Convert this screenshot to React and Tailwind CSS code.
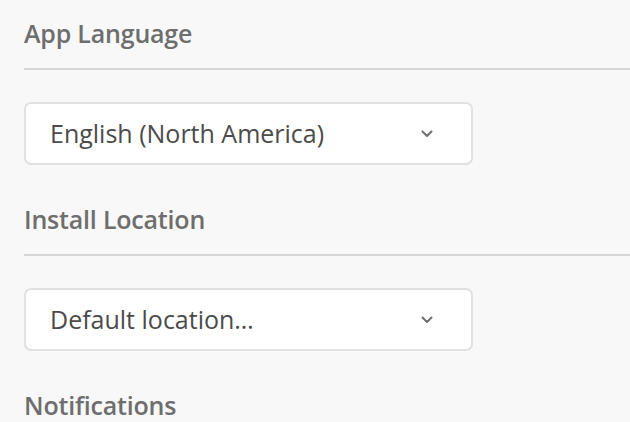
import React from 'react';

function Chevron() {
  return (
    <svg width="12" height="8" viewBox="0 0 12 8" className="text-[#6e6e6e]">
      <path d="M1.5 1.5 L6 6 L10.5 1.5" fill="none" stroke="currentColor" strokeWidth="2" strokeLinecap="round" strokeLinejoin="round" />
    </svg>
  );
}

function Picker({ value }) {
  return (
    <div className="mt-[32px] w-[449px] h-[63px] flex items-center justify-between bg-white border-2 border-[#e1e1e1] rounded-[7px] pl-[24px] pr-[38px]">
      <span className="text-[25px] text-[#4b4b4b]">{value}</span>
      <Chevron />
    </div>
  );
}

function Section({ title, value }) {
  return (
    <div className="flex flex-col">
      <div className="h-[70px] border-b-2 border-[#d6d6d6] flex items-end pb-[19px]">
        <h2 className="text-[25px] leading-[32px] font-semibold text-[#6e6e6e] tracking-[-0.2px]">{title}</h2>
      </div>
      {value && <Picker value={value} />}
    </div>
  );
}

export default function App() {
  return (
    <div
      className="w-[630px] h-[422px] overflow-hidden bg-[#f8f8f8] pl-[24px] flex flex-col gap-[21px]"
      style={{ fontFamily: '"Open Sans", "Noto Sans", sans-serif' }}
    >
      <Section title="App Language" value="English (North America)" />
      <Section title="Install Location" value="Default location…" />
      <Section title="Notifications" />
    </div>
  );
}
